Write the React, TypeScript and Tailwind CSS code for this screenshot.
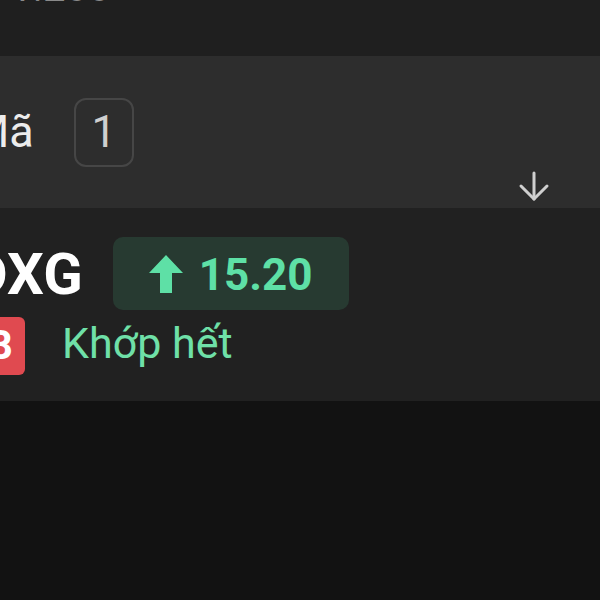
import React from "react";

function ArrowDownIcon() {
  return (
    <svg width="32" height="32" viewBox="0 0 32 32" fill="none" stroke="#cfcfcf" strokeWidth="3" strokeLinecap="round" strokeLinejoin="round">
      <path d="M16 3v26" />
      <path d="M3 16l13 13 13-13" />
    </svg>
  );
}

function UpArrowFilled() {
  return (
    <svg width="34" height="38" viewBox="0 0 34 38" fill="#5ee0a6">
      <path d="M17 0L34 18H23V38H11V18H0Z" />
    </svg>
  );
}

export default function App() {
  return (
    <div className="w-[600px] h-[600px] bg-[#121212] overflow-hidden font-['Roboto',sans-serif]">
      {/* top bar, mostly scrolled off */}
      <div className="h-[56px] bg-[#1f1f1f] overflow-hidden">
        <p className="-mt-[32px] ml-[10px] text-[40px] leading-[40px] text-[#8a8a8a]">1.200</p>
      </div>

      {/* table header */}
      <div className="h-[152px] bg-[#2d2d2d] flex items-center">
        <span className="-ml-[30px] text-[45px] text-[#ececec]">Mã</span>
        <div className="ml-[40px] w-[60px] h-[69px] rounded-[12px] border-2 border-[#464646] flex items-center justify-center text-[44px] text-[#cfcfcf]">
          1
        </div>
        <div className="ml-auto mr-[50px] self-end mb-[6px]">
          <ArrowDownIcon />
        </div>
      </div>

      {/* order row */}
      <div className="h-[193px] bg-[#212121] pt-[29px] flex flex-col gap-[7px]">
        <div className="flex items-center -ml-[30px]">
          <span className="text-[58px] font-bold text-white leading-none">DXG</span>
          <div className="ml-[30px] w-[236px] h-[73px] rounded-[10px] bg-[#273a31] flex items-center justify-center gap-[16px]">
            <UpArrowFilled />
            <span className="text-[44px] font-bold text-[#5ee0a6] leading-none pt-[3px]">15.20</span>
          </div>
        </div>
        <div className="flex items-center -ml-[25px]">
          <div className="w-[50px] h-[58px] rounded-[6px] bg-[#e04a50] flex items-center justify-center text-[40px] font-bold text-white">
            B
          </div>
          <span className="ml-[37px] text-[43px] leading-none pb-[6px] text-[#6fe0a8]">Khớp hết</span>
        </div>
      </div>
    </div>
  );
}
